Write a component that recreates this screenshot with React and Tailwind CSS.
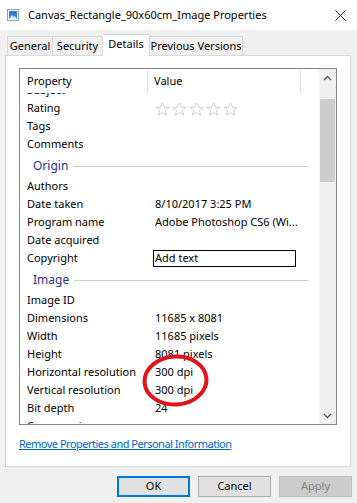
import React from "react";

const font = { fontFamily: '"Noto Sans", "Open Sans", Arial, sans-serif' };

const Star = () => (
  <svg width="15" height="14" viewBox="0 0 24 23" className="mr-[2px]">
    <path
      d="M12 1.5l3.1 7 7.4.6-5.6 4.9 1.7 7.4L12 17.5l-6.6 3.9 1.7-7.4L1.5 9.1l7.4-.6z"
      fill="none"
      stroke="#c4c4c4"
      strokeWidth="1.4"
      strokeLinejoin="round"
    />
  </svg>
);

const Row = ({ label, value, children }) => (
  <div className="flex h-[18px] items-center text-[11px] text-[#000]">
    <div className="w-[128px] shrink-0 pl-[7px] whitespace-nowrap">{label}</div>
    <div className="pl-[7px] whitespace-nowrap">{children || value}</div>
  </div>
);

const Group = ({ title }) => (
  <div className="flex h-[24px] items-center pl-[13px] pt-[2px] pr-[11px]">
    <span className="text-[12px] text-[#1e3287] whitespace-nowrap">{title}</span>
    <div className="ml-[5px] h-px flex-1 bg-[#c5ccd8]" />
  </div>
);

const Chevron = ({ up }) => (
  <svg width="9" height="6" viewBox="0 0 9 6">
    <path
      d={up ? "M1 5 L4.5 1.5 L8 5" : "M1 1 L4.5 4.5 L8 1"}
      fill="none"
      stroke="#606060"
      strokeWidth="1.4"
    />
  </svg>
);

const tab = "h-[19px] flex items-center justify-center border border-b-0 border-[#d9d9d9] bg-[#f0f0f0] text-[11px] whitespace-nowrap";

const App = () => {
  return (
    <div
      className="relative w-[357px] h-[503px] overflow-hidden bg-[#f0f0f0] flex flex-col"
      style={font}
    >
      {/* Title bar */}
      <div className="h-[30px] shrink-0 bg-white flex items-center pl-[7px] pr-[11px]">
        <svg width="12" height="12" viewBox="0 0 12 12">
          <rect x="0.5" y="0.5" width="11" height="11" fill="#fff" stroke="#8aa6c8" />
          <rect x="2" y="2" width="8" height="8" fill="#2f7fd6" />
          <path d="M2 10 L5 6 L7 8 L8 7 L10 10 Z" fill="#d7ecff" />
        </svg>
        <span className="ml-[9px] text-[11px] text-[#000] whitespace-nowrap">
          Canvas_Rectangle_90x60cm_Image Properties
        </span>
        <svg width="11" height="11" viewBox="0 0 11 11" className="ml-auto">
          <path d="M0.5 0.5 L10.5 10.5 M10.5 0.5 L0.5 10.5" stroke="#222" strokeWidth="1" />
        </svg>
      </div>

      {/* Tabs */}
      <div className="mt-[4px] flex items-end pl-[7px] h-[21px] relative z-10">
        <div className={`${tab} w-[46px]`}>General</div>
        <div className={`${tab} w-[50px] border-l-0`}>Security</div>
        <div className="h-[22px] w-[47px] -mb-px flex items-center justify-center border border-b-0 border-l-0 border-[#d9d9d9] bg-white text-[11px] pb-[2px]">
          Details
        </div>
        <div className={`${tab} w-[93px] border-l-0`}>Previous Versions</div>
      </div>

      {/* Tab page */}
      <div className="ml-[5px] w-[346px] h-[412px] bg-white border border-[#d9d9d9] pt-[12px] pl-[13px]">
        <div className="relative w-[318px] h-[357px] border border-[#828790] flex">
          <div className="relative flex-1 overflow-hidden">
            {/* Header */}
            <div className="absolute top-0 left-0 right-0 h-[24px] bg-white z-10 flex text-[11px]">
              <div className="w-[128px] pl-[7px] flex items-center border-r border-[#e5e5e5] mt-[1px]">
                Property
              </div>
              <div className="w-[153px] pl-[6px] flex items-center border-r border-[#e5e5e5] mt-[1px]">
                Value
              </div>
            </div>
            <div className="mt-[12px]">
              <Row label="Subject" value="" />
              <Row label="Rating">
                <div className="flex items-center pt-[1px]">
                  <Star />
                  <Star />
                  <Star />
                  <Star />
                  <Star />
                </div>
              </Row>
              <Row label="Tags" value="" />
              <Row label="Comments" value="" />
              <Group title="Origin" />
              <Row label="Authors" value="" />
              <Row label="Date taken" value="8/10/2017 3:25 PM" />
              <Row label="Program name" value="Adobe Photoshop CS6 (Wi..." />
              <Row label="Date acquired" value="" />
              <Row label="Copyright">
                <div className="-ml-[2px] w-[143px] h-[17px] border border-black flex items-center pl-[1px]">
                  Add text
                </div>
              </Row>
              <Group title="Image" />
              <Row label="Image ID" value="" />
              <Row label="Dimensions" value="11685 x 8081" />
              <Row label="Width" value="11685 pixels" />
              <Row label="Height" value="8081 pixels" />
              <Row label="Horizontal resolution" value="300 dpi" />
              <Row label="Vertical resolution" value="300 dpi" />
              <Row label="Bit depth" value="24" />
              <Row label="Compression" value="" />
            </div>
          </div>

          {/* Scrollbar */}
          <div className="w-[17px] shrink-0 bg-[#f0f0f0] flex flex-col items-center">
            <div className="h-[17px] w-full flex items-center justify-center">
              <Chevron up />
            </div>
            <div className="mt-[13px] h-[83px] w-[15px] bg-[#cdcdcd]" />
            <div className="mt-auto h-[17px] w-full flex items-center justify-center">
              <Chevron />
            </div>
          </div>
        </div>

        <div className="mt-[11px] leading-[16px] text-[11px] tracking-[-0.5px] text-[#0066cc] underline whitespace-nowrap">
          Remove Properties and Personal Information
        </div>
      </div>

      {/* Buttons */}
      <div className="mt-[9px] flex justify-end gap-[8px] pr-[5px]">
        <button className="w-[73px] h-[21px] bg-[#e1e1e1] border-2 border-[#0078d7] text-[11px] text-black">
          OK
        </button>
        <button className="w-[73px] h-[21px] bg-[#e1e1e1] border border-[#adadad] text-[11px] text-black">
          Cancel
        </button>
        <button className="w-[73px] h-[21px] bg-[#cccccc] border border-[#bfbfbf] text-[11px] text-[#838383]">
          Apply
        </button>
      </div>

      {/* Red ellipse markup */}
      <svg
        className="absolute left-[140px] top-[352px] pointer-events-none"
        width="72"
        height="58"
        viewBox="0 0 72 58"
      >
        <ellipse
          cx="35.5"
          cy="28.5"
          rx="31"
          ry="24"
          transform="rotate(-4 35.5 28.5)"
          fill="none"
          stroke="#e3131b"
          strokeWidth="4"
        />
      </svg>
    </div>
  );
};

export default App;
